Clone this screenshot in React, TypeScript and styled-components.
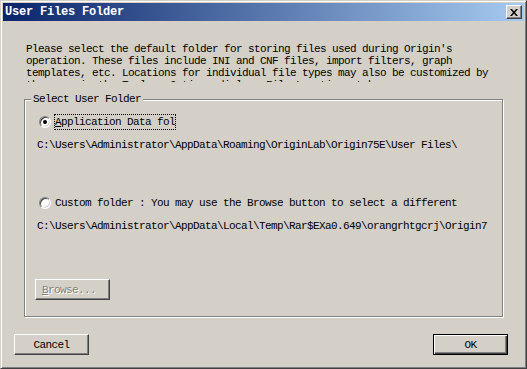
import styled, { createGlobalStyle } from 'styled-components';

const GlobalStyle = createGlobalStyle`
  html, body {
    margin: 0;
    padding: 0;
    background: #d4d0c8;
  }
`;

const mono = `"Liberation Mono", "DejaVu Sans Mono", monospace`;

const introLines = [
  "Please select the default folder for storing files used during Origin's",
  'operation. These files include INI and CNF files, import filters, graph',
  'templates, etc. Locations for individual file types may also be customized by',
  'the user in the Tools : Options dialog, File Locations tab.',
];

const App = () => {
  return (
    <>
      <GlobalStyle />
      <Window>
        <TitleBar>
          <Title>User Files Folder</Title>
          <CloseButton>
            <svg width="8" height="7" viewBox="0 0 8 7">
              <path d="M0 0h2l2 2.5L6 0h2L5 3.5 8 7H6L4 4.5 2 7H0l3-3.5z" fill="#000" />
            </svg>
          </CloseButton>
        </TitleBar>
        <Body>
          <Intro>
            {introLines.map((line) => (
              <Line key={line}>{line}</Line>
            ))}
          </Intro>
          <GroupBox>
            <GroupLabel>Select User Folder</GroupLabel>
            <RadioRow $top={14}>
              <Radio $checked />
              <RadioLabel $focused>
                <u>A</u>pplication Data fol
              </RadioLabel>
            </RadioRow>
            <PathText>C:\Users\Administrator\AppData\Roaming\OriginLab\Origin75E\User Files\</PathText>
            <RadioRow $top={44}>
              <Radio />
              <RadioLabel>Custom folder : You may use the Browse button to select a different</RadioLabel>
            </RadioRow>
            <PathText>C:\Users\Administrator\AppData\Local\Temp\Rar$EXa0.649\orangrhtgcrj\Origin7</PathText>
            <BrowseButton disabled>
              <u>B</u>rowse...
            </BrowseButton>
          </GroupBox>
          <ButtonRow>
            <PushButton>Cancel</PushButton>
            <PushButton $default>OK</PushButton>
          </ButtonRow>
        </Body>
      </Window>
    </>
  );
};

export default App;

const Window = styled.div`
  box-sizing: border-box;
  width: 527px;
  height: 369px;
  display: flex;
  flex-direction: column;
  padding: 2px;
  background: #d4d0c8;
  border: 1px solid;
  border-color: #d4d0c8 #404040 #404040 #d4d0c8;
  box-shadow: inset 1px 1px 0 #ffffff, inset -1px -1px 0 #808080;
  font-family: ${mono};
  font-size: 11px;
  letter-spacing: -0.6px;
  color: #000;
`;

const TitleBar = styled.div`
  height: 18px;
  display: flex;
  align-items: center;
  justify-content: space-between;
  padding: 0 2px 0 2px;
  background: linear-gradient(to right, #0a246a, #a6caf0);
`;

const Title = styled.div`
  color: #ffffff;
  font-family: ${mono};
  font-weight: bold;
  font-size: 12px;
  letter-spacing: -0.2px;
  line-height: 18px;
`;

const CloseButton = styled.div`
  box-sizing: border-box;
  width: 16px;
  height: 14px;
  display: flex;
  align-items: center;
  justify-content: center;
  background: #d4d0c8;
  border: 1px solid;
  border-color: #ffffff #404040 #404040 #ffffff;
  box-shadow: inset -1px -1px 0 #808080;
`;

const Body = styled.div`
  flex: 1;
  display: flex;
  flex-direction: column;
`;

const Intro = styled.div`
  margin: 22px 0 0 23px;
  height: 39px;
  overflow: hidden;
`;

const Line = styled.div`
  line-height: 12px;
  height: 12px;
  white-space: pre;
`;

const GroupBox = styled.div`
  position: relative;
  box-sizing: border-box;
  margin: 17px 0 0 21px;
  width: 479px;
  height: 218px;
  padding-left: 10px;
  display: flex;
  flex-direction: column;
  align-items: flex-start;
  border: 1px solid #808080;
  box-shadow: 1px 1px 0 #ffffff, inset 1px 1px 0 #ffffff;
`;

const GroupLabel = styled.div`
  position: absolute;
  top: -7px;
  left: 6px;
  padding: 0 2px;
  line-height: 12px;
  background: #d4d0c8;
`;

const RadioRow = styled.div<{ $top: number }>`
  display: flex;
  align-items: center;
  height: 16px;
  margin: ${(p) => p.$top}px 0 0 4px;
`;

const Radio = styled.span<{ $checked?: boolean }>`
  position: relative;
  box-sizing: border-box;
  width: 12px;
  height: 12px;
  border-radius: 50%;
  background: #ffffff;
  border: 1px solid;
  border-color: #808080 #ffffff #ffffff #808080;
  box-shadow: inset 1px 1px 0 #404040, inset -1px -1px 0 #d4d0c8;

  &::after {
    content: '';
    display: ${(p) => (p.$checked ? 'block' : 'none')};
    position: absolute;
    left: 3px;
    top: 3px;
    width: 4px;
    height: 4px;
    border-radius: 50%;
    background: #000;
  }
`;

const RadioLabel = styled.span<{ $focused?: boolean }>`
  margin-left: 3px;
  line-height: 12px;
  padding: 1px 0;
  border: 1px dotted ${(p) => (p.$focused ? '#000' : 'transparent')};
  white-space: pre;
`;

const PathText = styled.div`
  margin: 9px 0 0 2px;
  line-height: 12px;
  white-space: pre;
`;

const buttonBase = `
  box-sizing: border-box;
  width: 75px;
  height: 21px;
  padding: 0;
  background: #d4d0c8;
  font-family: ${mono};
  font-size: 11px;
  letter-spacing: -0.6px;
  line-height: 12px;
  border: 1px solid;
  border-color: #ffffff #404040 #404040 #ffffff;
  box-shadow: inset -1px -1px 0 #808080;
  outline: none;
`;

const BrowseButton = styled.button`
  ${buttonBase}
  margin-top: 47px;
  color: #808080;
  text-shadow: 1px 1px 0 #ffffff;
  text-align: left;
  padding-left: 6px;
`;

const ButtonRow = styled.div`
  display: flex;
  justify-content: space-between;
  margin: 17px 16px 0 11px;
`;

const PushButton = styled.button<{ $default?: boolean }>`
  ${buttonBase}
  color: #000;
  ${(p) =>
    p.$default &&
    `
    border: 1px solid #000;
    box-shadow: inset 1px 1px 0 #ffffff, inset -1px -1px 0 #404040, inset -2px -2px 0 #808080;
  `}
`;
